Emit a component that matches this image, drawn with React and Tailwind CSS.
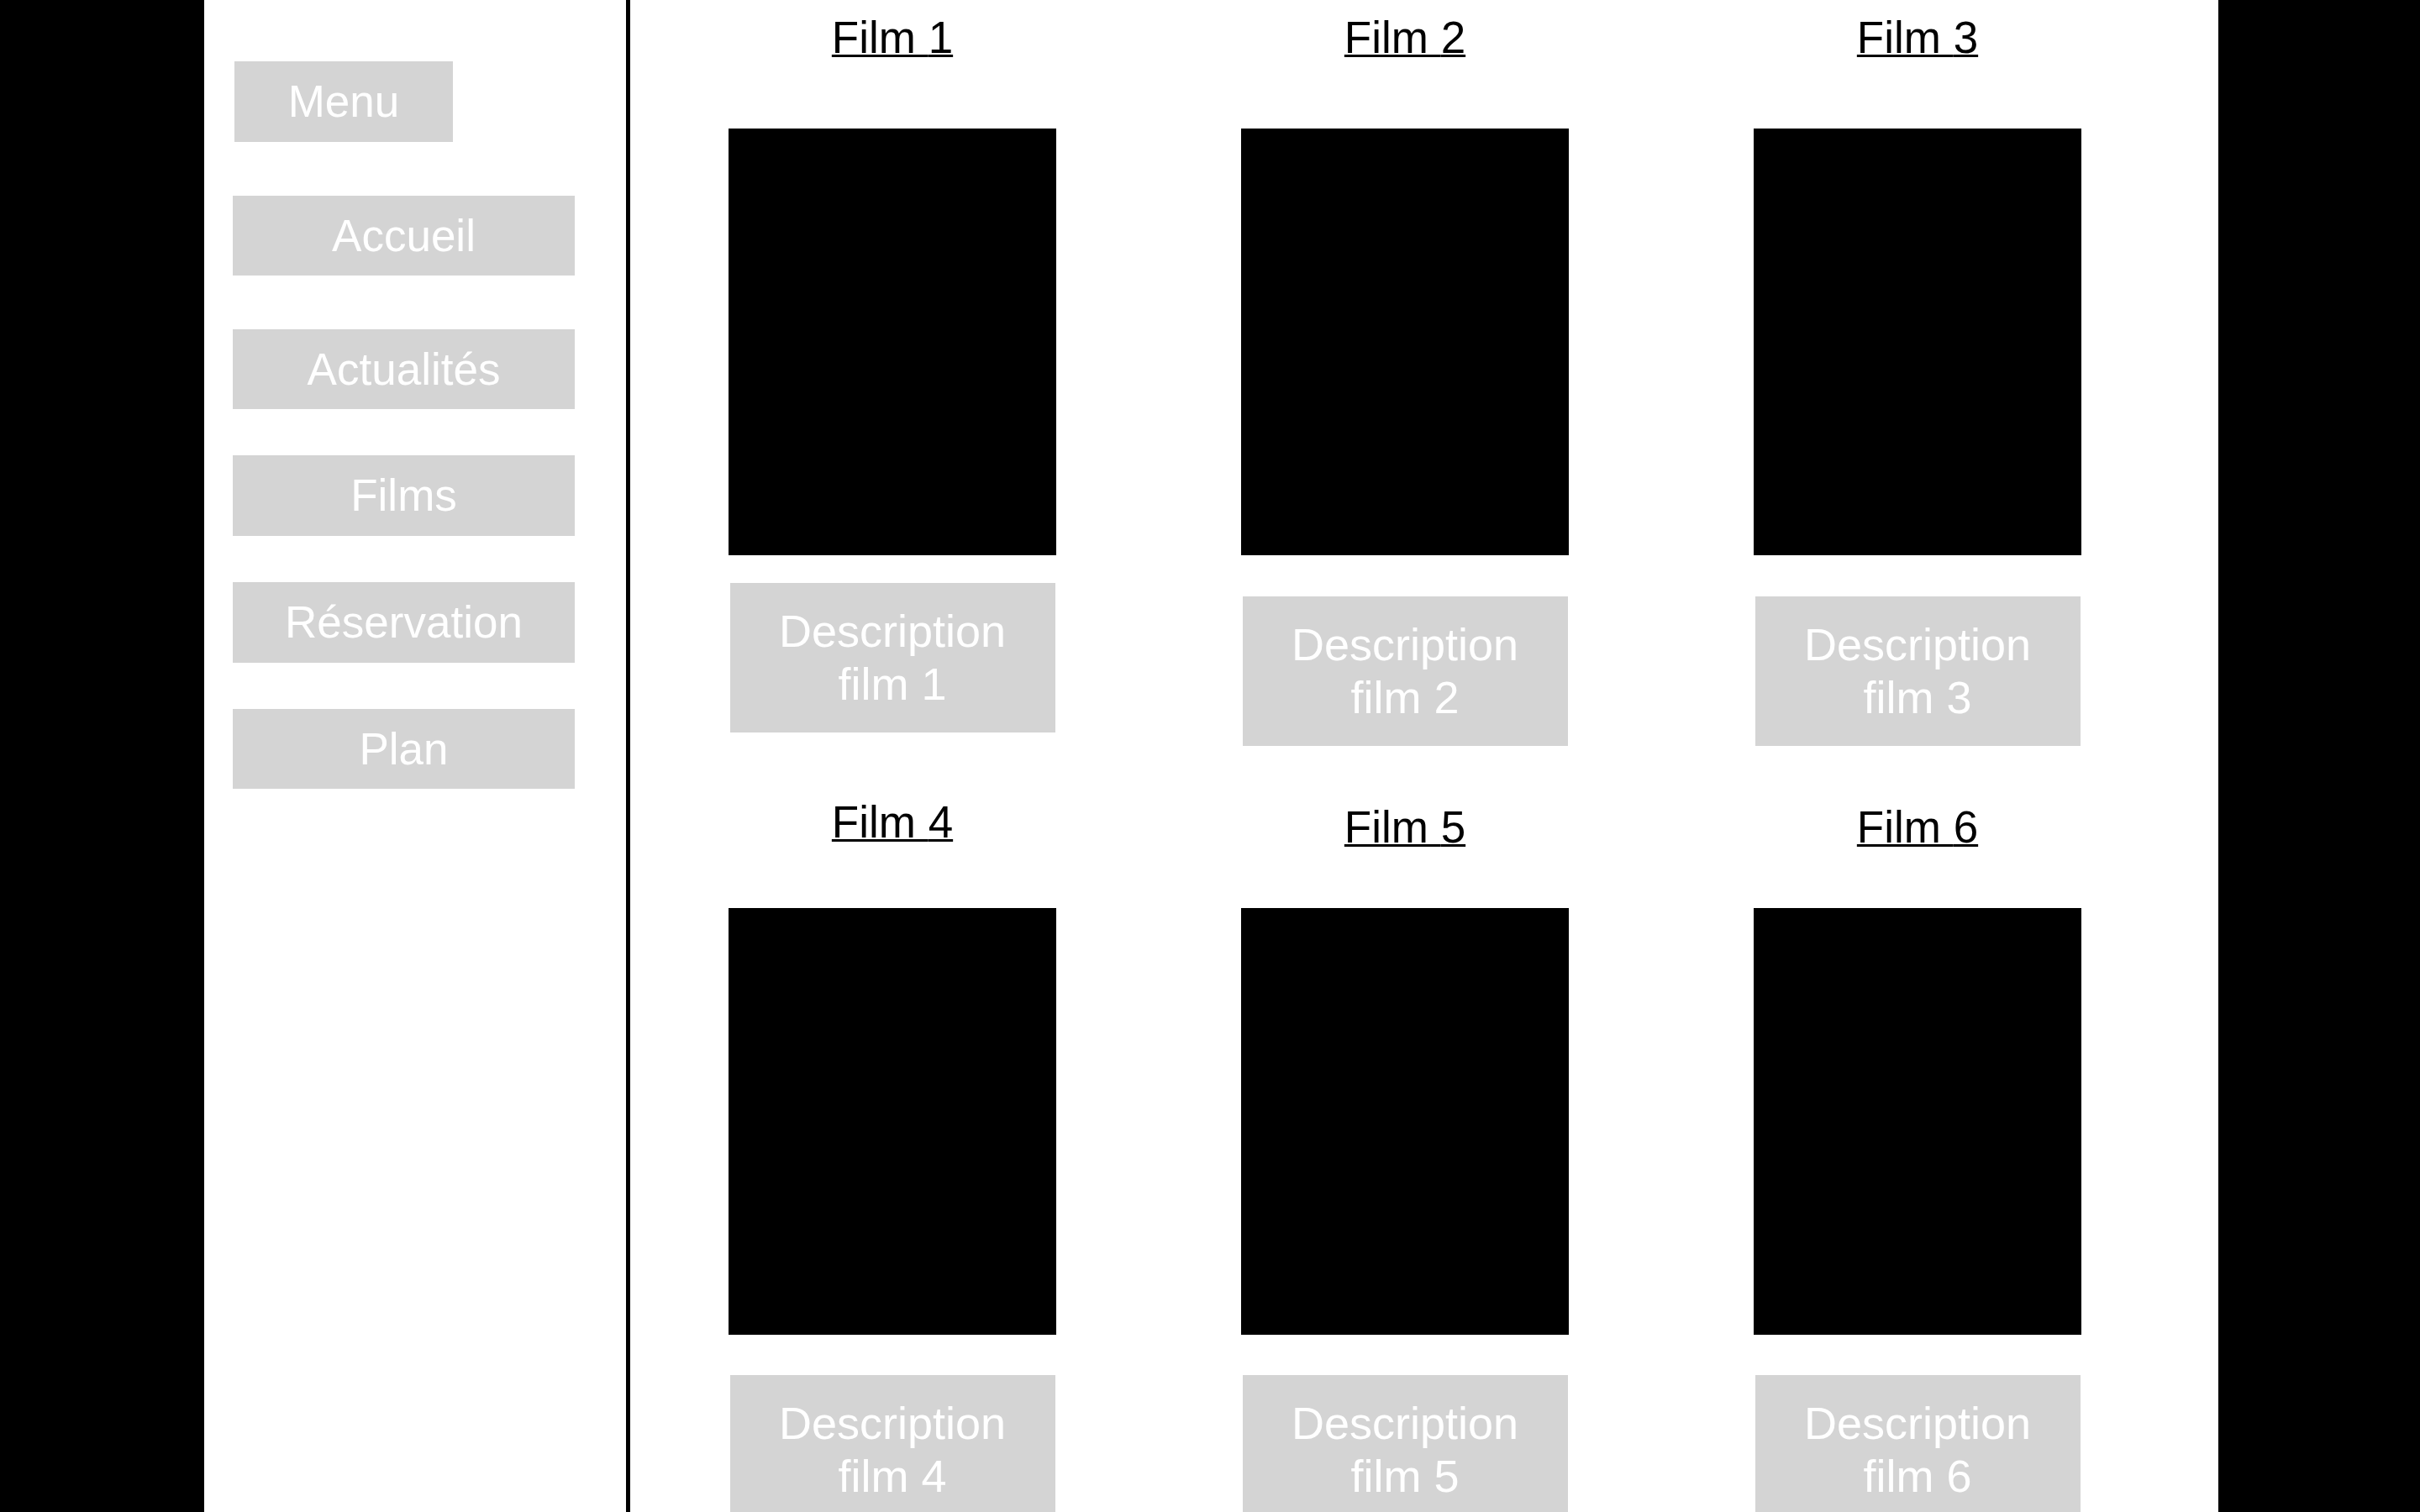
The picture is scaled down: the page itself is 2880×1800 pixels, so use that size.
import React from "react";

const menuItems = [
  { label: "Accueil", cls: "mt-[64px] h-[95px]" },
  { label: "Actualités", cls: "mt-[64px] h-[95px]" },
  { label: "Films", cls: "mt-[55px] h-[96px]" },
  { label: "Réservation", cls: "mt-[55px] h-[96px]" },
  { label: "Plan", cls: "mt-[55px] h-[95px]" },
];

const films = [
  { n: 1, title: "mt-[15px]", poster: "mt-[78px]", desc: "mt-[33px]" },
  { n: 2, title: "mt-[15px]", poster: "mt-[78px]", desc: "mt-[49px]" },
  { n: 3, title: "mt-[15px]", poster: "mt-[78px]", desc: "mt-[49px]" },
  { n: 4, title: "mt-[61px]", poster: "mt-[72px]", desc: "mt-[48px]" },
  { n: 5, title: "mt-[67px]", poster: "mt-[66px]", desc: "mt-[48px]" },
  { n: 6, title: "mt-[67px]", poster: "mt-[66px]", desc: "mt-[48px]" },
];

export default function App() {
  return (
    <div className="min-h-screen bg-black flex pl-[243px] font-['Liberation_Sans',Arial,sans-serif]">
      <aside className="w-[507px] shrink-0 bg-white border-r-[5px] border-black pl-[34px] pt-[73px] flex flex-col items-start">
        <div className="ml-[2px] w-[260px] h-[96px] bg-[#d4d4d4] text-white text-[53px] flex items-center justify-center">
          Menu
        </div>
        {menuItems.map((m) => (
          <a
            key={m.label}
            href="#"
            className={`${m.cls} w-[407px] bg-[#d4d4d4] text-white text-[53px] flex items-center justify-center`}
          >
            {m.label}
          </a>
        ))}
      </aside>

      <main className="w-[1890px] shrink-0 bg-white pl-[7px]">
        <div className="grid grid-cols-3 w-[1830px] items-start">
          {films.map((f) => (
            <FilmCard key={f.n} film={f} />
          ))}
        </div>
      </main>
    </div>
  );
}

function FilmCard({ film }) {
  return (
    <div className="flex flex-col items-center">
      <h2 className={`${film.title} h-[60px] text-[53px] leading-[60px] text-black underline decoration-[3px] underline-offset-[2px]`}>
        Film {film.n}
      </h2>
      <div className={`${film.poster} w-[390px] h-[508px] bg-black`} />
      <div className={`${film.desc} w-[387px] h-[178px] bg-[#d4d4d4] text-white text-[54px] leading-[63px] flex items-center justify-center text-center`}>
        Description
        <br />
        film {film.n}
      </div>
    </div>
  );
}
